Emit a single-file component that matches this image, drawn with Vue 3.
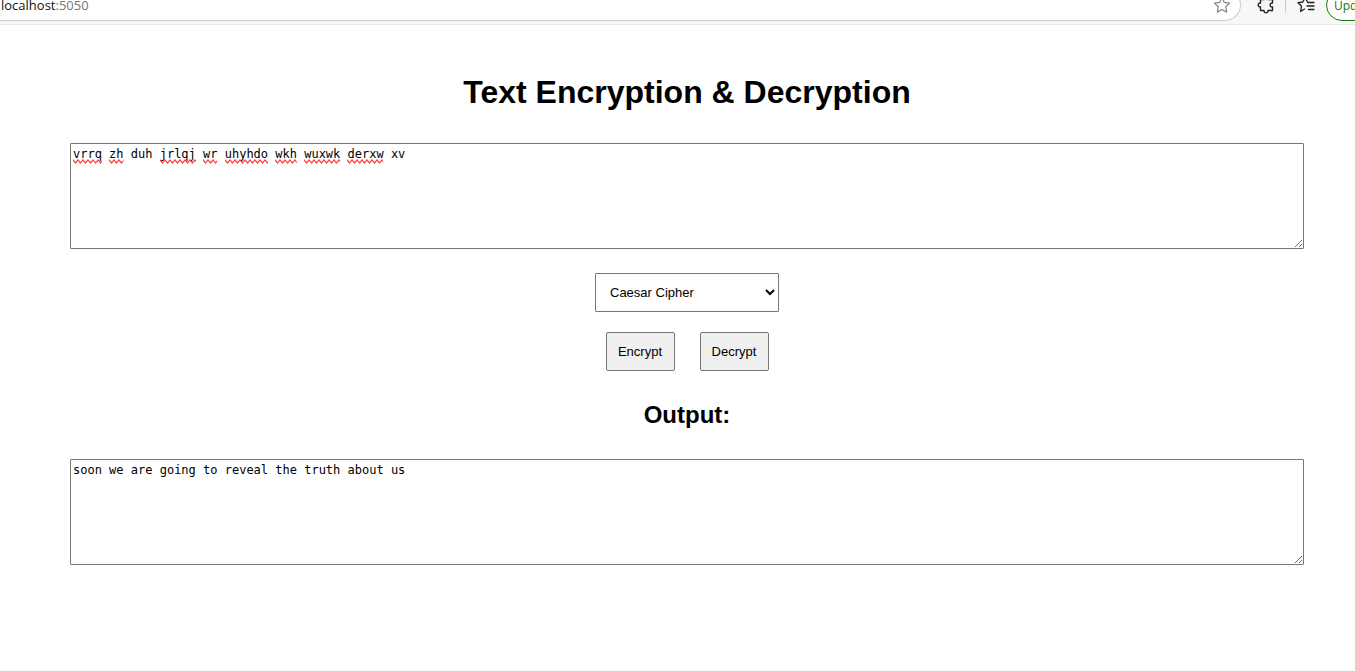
<script setup>
import { ref, computed } from 'vue'

const input = ref('vrrq zh duh jrlqj wr uhyhdo wkh wuxwk derxw xv')
const output = ref('soon we are going to reveal the truth about us')
const cipher = ref('caesar')
const known = ['duh', 'xv']

const marks = computed(() =>
  input.value.split(' ').map((word) => ({ length: word.length, wrong: !known.includes(word) }))
)

function shift(text, by) {
  return text.replace(/[a-z]/g, (c) => String.fromCharCode(((c.charCodeAt(0) - 97 + by + 26) % 26) + 97))
}
function encrypt() {
  output.value = shift(input.value, 3)
}
function decrypt() {
  output.value = shift(input.value, -3)
}
</script>

<template>
  <header class="toolbar">
    <div class="address">
      <span class="url">localhost<span class="port">:5050</span></span>
      <button class="icon" type="button" aria-label="Add to favorites">
        <svg width="18" height="18" viewBox="0 0 18 18" fill="none" stroke="#858585" stroke-width="1.2" stroke-linejoin="round">
          <path d="M9 1.5l2.3 4.900 5.300.7-3.900 3.600 1 5.400L9 13.500l-4.700 2.600 1-5.400-3.900-3.600 5.300-.7z" />
        </svg>
      </button>
    </div>
    <button class="icon extensions" type="button" aria-label="Extensions">
      <svg width="18" height="18" viewBox="0 0 18 18" fill="none" stroke="#222" stroke-width="1.4" stroke-linejoin="round">
        <path d="M4.500 3.500H8c-.4-2.800 4.400-2.800 4 0h4.500V7c-3.200-.2-3.200 4.200 0 4v3.500H12c.3 3.200-4.300 3.200-4 0H4.500V11c-3 .2-3-4.200 0-4z" />
      </svg>
    </button>
    <span class="divider"></span>
    <button class="icon favorites" type="button" aria-label="Favorites">
      <svg width="18" height="18" viewBox="0 0 18 18" fill="none" stroke="#222" stroke-width="1.3" stroke-linejoin="round" stroke-linecap="round">
        <path d="M10.500 6L8 1.500 5.800 6l-4.800.7 3.500 3.500-.9 5.300L7.500 13M11 6.500h6M10 10h7M11.500 13.500H17" />
      </svg>
    </button>
    <button class="update" type="button">Update</button>
  </header>

  <main class="page">
    <h1>Text Encryption &amp; Decryption</h1>
    <div class="field">
      <textarea v-model="input" aria-label="Text" spellcheck="false"></textarea>
      <div class="marks" aria-hidden="true">
        <span v-for="(mark, i) in marks" :key="i" class="mark" :style="{ width: mark.length + 'ch' }">
          <svg v-if="mark.wrong" width="100%" height="5">
            <defs>
              <pattern :id="'wave' + i" width="5" height="5" patternUnits="userSpaceOnUse">
                <path d="M-2.500 4L0 1L2.500 4L5 1L7.500 4" fill="none" stroke="#f44" stroke-width="1.300" />
              </pattern>
            </defs>
            <rect width="100%" height="5" :fill="'url(#wave' + i + ')'" />
          </svg>
        </span>
      </div>
    </div>
    <select v-model="cipher" aria-label="Cipher">
      <option value="caesar">Caesar Cipher</option>
    </select>
    <div class="actions">
      <button type="button" @click="encrypt">Encrypt</button>
      <button type="button" @click="decrypt">Decrypt</button>
    </div>
    <h2><label for="output">Output:</label></h2>
    <div class="field">
      <textarea id="output" v-model="output" readonly spellcheck="false"></textarea>
    </div>
  </main>
</template>

<style>
body {
  margin: 0;
  background: #fff;
}
</style>

<style scoped>
.toolbar {
  display: flex;
  align-items: flex-end;
  box-sizing: border-box;
  height: 25px;
  padding-bottom: 3px;
  overflow: hidden;
  background: #f7f7f7;
  border-bottom: 1px solid #e8e8e8;
  font-family: "Open Sans", "Noto Sans", sans-serif;
  font-size: 13px;
}
.address {
  display: flex;
  flex: 1;
  align-items: center;
  justify-content: space-between;
  box-sizing: border-box;
  height: 32px;
  padding: 0 9px 0 1px;
  background: #fff;
  border: 1px solid #ccc;
  border-left: 0;
  border-radius: 0 16px 16px 0;
}
.url {
  color: #111;
  line-height: 12px;
}
.port {
  color: #767676;
}
.icon {
  flex: none;
  width: 18px;
  height: 18px;
  padding: 0;
  background: none;
  border: 0;
}
.icon svg {
  display: block;
}
.extensions {
  margin: 0 11px 7px 15px;
}
.divider {
  width: 1px;
  height: 24px;
  margin-bottom: 8px;
  background: #ccc;
}
.favorites {
  margin: 0 11px 7px;
}
.update {
  flex: none;
  box-sizing: border-box;
  width: 80px;
  height: 32px;
  margin-right: -51px;
  padding: 0 7px;
  color: #107c10;
  background: #fff;
  border: 1px solid #107c10;
  border-radius: 16px;
  font-family: "Open Sans", "Noto Sans", sans-serif;
  font-size: 12px;
  text-align: left;
}
.page {
  display: flex;
  flex-direction: column;
  align-items: center;
  padding: 48px 51px 48px 70px;
  color: #000;
  font-family: "Liberation Sans", Arial, sans-serif;
}
h1,
h2 {
  margin: 0;
  font-weight: bold;
}
h1 {
  margin-bottom: 32px;
  font-size: 32px;
  line-height: 38px;
}
h2 {
  margin: 30px 0;
  font-size: 24px;
  line-height: 28px;
}
.field {
  position: relative;
  width: 100%;
}
textarea {
  display: block;
  box-sizing: border-box;
  width: 100%;
  height: 106px;
  margin: 0;
  padding: 2px;
  color: #000;
  background: #fff;
  border: 1px solid #767676;
  border-radius: 1px;
  font: 12px/16px "DejaVu Sans Mono", monospace;
  resize: vertical;
}
.marks {
  position: absolute;
  top: 16px;
  left: 3px;
  display: flex;
  gap: 1ch;
  font: 12px/5px "DejaVu Sans Mono", monospace;
  pointer-events: none;
}
.mark {
  height: 5px;
}
.mark svg {
  display: block;
}
select,
.actions button {
  box-sizing: border-box;
  height: 39px;
  color: #000;
  border: 1px solid #767676;
  font: 13px "Liberation Sans", Arial, sans-serif;
}
select {
  width: 184px;
  margin: 24px 0 20px;
  padding: 10px;
  background-color: #fff;
  border-radius: 1px;
}
.actions {
  display: flex;
  gap: 25px;
}
.actions button {
  min-width: 69px;
  padding: 0 11px;
  background: #efefef;
  border-radius: 2px;
}
</style>
